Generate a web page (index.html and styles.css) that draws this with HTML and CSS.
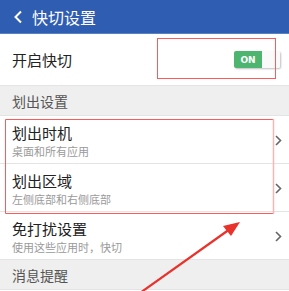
FILE: index.html
```html
<!DOCTYPE html>
<html>
<head>
<meta charset="utf-8">
<link rel="stylesheet" href="styles.css">
</head>
<body>
<div class="screen">
  <header class="topbar">
    <svg class="back" width="10" height="14" viewBox="0 0 10 14"><path d="M8 1.5 L2.5 7 L8 12.5" fill="none" stroke="#fff" stroke-width="2"/></svg>
    <span class="title">快切设置</span>
  </header>
  <div class="row row-main">
    <span class="label">开启快切</span>
    <div class="toggle"><span class="on">ON</span><span class="knob"></span></div>
  </div>
  <div class="section">划出设置</div>
  <div class="row row-item">
    <div class="texts"><div class="label">划出时机</div><div class="sub">桌面和所有应用</div></div>
    <svg class="chev" width="7" height="11" viewBox="0 0 7 11"><path d="M1 1 L5.5 5.5 L1 10" fill="none" stroke="#666" stroke-width="1.6"/></svg>
  </div>
  <div class="row row-item">
    <div class="texts"><div class="label">划出区域</div><div class="sub">左侧底部和右侧底部</div></div>
    <svg class="chev" width="7" height="11" viewBox="0 0 7 11"><path d="M1 1 L5.5 5.5 L1 10" fill="none" stroke="#666" stroke-width="1.6"/></svg>
  </div>
  <div class="row row-item">
    <div class="texts"><div class="label">免打扰设置</div><div class="sub">使用这些应用时，快切</div></div>
    <svg class="chev" width="7" height="11" viewBox="0 0 7 11"><path d="M1 1 L5.5 5.5 L1 10" fill="none" stroke="#666" stroke-width="1.6"/></svg>
  </div>
  <div class="section">消息提醒</div>

  <svg class="overlay" width="289" height="291" viewBox="0 0 289 291">
    <rect x="157.5" y="38.5" width="118" height="40" fill="none" stroke="#ff5a5a" stroke-width="1"/>
    <path d="M273.5 119.5 H5.5 V213.5 H273.5" fill="none" stroke="#ff5a5a" stroke-width="1"/>
    <line x1="273.5" y1="119" x2="273.5" y2="214" stroke="#fbb4b4" stroke-width="1.5"/>
    <line x1="140" y1="293" x2="230" y2="229" stroke="#e8322c" stroke-width="2.2"/>
    <polygon points="240,222 223,226 231,236" fill="#e8322c"/>
  </svg>
</div>
</body>
</html>
```

FILE: styles.css
```css
* { box-sizing: border-box; margin: 0; padding: 0; }
html, body { width: 289px; height: 291px; overflow: hidden; background: #fff; }
body { font-family: "Noto Sans CJK SC", "Noto Sans", sans-serif; color: #222; }
.screen { position: relative; width: 289px; height: 291px; }
.topbar { height: 34px; background: #2f5db1; border-bottom: 1px solid #5a80c4; display: flex; align-items: center; padding-left: 13px; }
.back { margin-right: 9px; }
.title { color: #fff; font-size: 16px; line-height: 1; }
.row { display: flex; align-items: center; background: #fff; border-bottom: 1px solid #e4e4e4; }
.row-main { height: 52px; padding: 0 9px 0 12px; justify-content: space-between; }
.label { font-size: 15px; line-height: 18px; color: #222; }
.toggle { display: flex; height: 17px; border-radius: 2px; box-shadow: 1px 1px 2px rgba(0,0,0,0.25); }
.on { width: 28px; background: #4db56f; color: #fff; font-family: "DejaVu Sans", sans-serif; font-weight: bold; font-size: 9px; display: flex; align-items: center; justify-content: center; border-radius: 2px 0 0 2px; }
.knob { width: 18px; background: #fafafa; border-radius: 0 2px 2px 0; }
.section { height: 30px; background: #efefef; font-size: 14px; color: #555; padding-left: 12px; display: flex; align-items: center; border-bottom: 1px solid #e4e4e4; }
.row-item { height: 48px; padding: 0 7px 0 12px; justify-content: space-between; }
.row-item .texts { display: flex; flex-direction: column; gap: 3px; padding-top: 2px; }
.sub { font-size: 11px; line-height: 13px; color: #9a9a9a; }
.chev { margin-top: 2px; }
.overlay { position: absolute; left: 0; top: 0; pointer-events: none; }
```
